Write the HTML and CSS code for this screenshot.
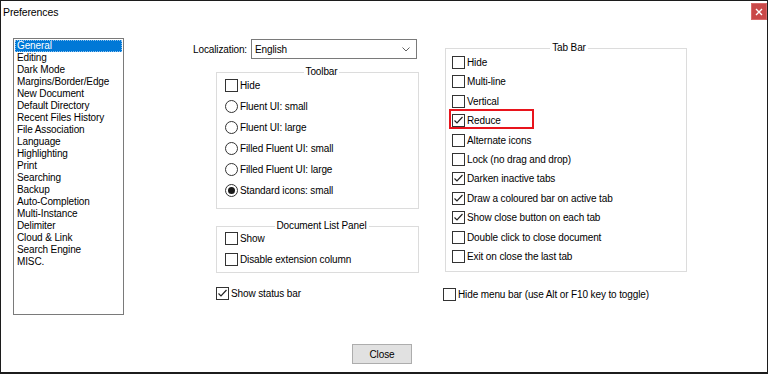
FILE: index.html
```html
<!DOCTYPE html>
<html>
<head>
   <title>Preferences</title>
   <link rel="stylesheet" href="styles.css">
</head>
<body>

<div class="window">
   <div class="titlebar">
      <span class="title">Preferences</span>
      <span class="xbtn"><svg width="8" height="8" viewBox="0 0 8 8"><path d="M1 1l6 6M7 1l-6 6" stroke="#fff" stroke-width="1.4"/></svg></span>
   </div>

   <div class="main">
      <!-- liste des pages -->
      <ul class="listbox">
         <li class="sel">General</li>
         <li>Editing</li>
         <li>Dark Mode</li>
         <li>Margins/Border/Edge</li>
         <li>New Document</li>
         <li>Default Directory</li>
         <li>Recent Files History</li>
         <li>File Association</li>
         <li>Language</li>
         <li>Highlighting</li>
         <li>Print</li>
         <li>Searching</li>
         <li>Backup</li>
         <li>Auto-Completion</li>
         <li>Multi-Instance</li>
         <li>Delimiter</li>
         <li>Cloud &amp; Link</li>
         <li>Search Engine</li>
         <li>MISC.</li>
      </ul>

      <div class="col-mid">
         <div class="loc">
            <span class="loc-label">Localization:</span>
            <div class="combo">
               <span>English</span>
               <svg width="8" height="5" viewBox="0 0 8 5"><path d="M0.5 0.5l3.5 3.5 3.5-3.5" fill="none" stroke="#606060"/></svg>
            </div>
         </div>

         <fieldset class="grp grp-toolbar">
            <legend>Toolbar</legend>
            <div class="opt"><span class="cb"></span>Hide</div>
            <div class="opt"><span class="rb"></span>Fluent UI: small</div>
            <div class="opt"><span class="rb"></span>Fluent UI: large</div>
            <div class="opt"><span class="rb"></span>Filled Fluent UI: small</div>
            <div class="opt"><span class="rb"></span>Filled Fluent UI: large</div>
            <div class="opt"><span class="rb on"></span>Standard icons: small</div>
         </fieldset>

         <fieldset class="grp grp-doclist">
            <legend>Document List Panel</legend>
            <div class="opt"><span class="cb"></span>Show</div>
            <div class="opt"><span class="cb"></span>Disable extension column</div>
         </fieldset>

         <div class="opt status"><span class="cb"><svg viewBox="0 0 11 11"><path d="M1.5 5.5l2.5 2.5 5.5-6"/></svg></span>Show status bar</div>
      </div>

      <div class="col-right">
         <fieldset class="grp grp-tabbar">
            <legend>Tab Bar</legend>
            <div class="opt"><span class="cb"></span>Hide</div>
            <div class="opt"><span class="cb"></span>Multi-line</div>
            <div class="opt"><span class="cb"></span>Vertical</div>
            <div class="opt hl"><span class="cb"><svg viewBox="0 0 11 11"><path d="M1.5 5.5l2.5 2.5 5.5-6"/></svg></span>Reduce</div>
            <div class="opt"><span class="cb"></span>Alternate icons</div>
            <div class="opt"><span class="cb"></span>Lock (no drag and drop)</div>
            <div class="opt"><span class="cb"><svg viewBox="0 0 11 11"><path d="M1.5 5.5l2.5 2.5 5.5-6"/></svg></span>Darken inactive tabs</div>
            <div class="opt"><span class="cb"><svg viewBox="0 0 11 11"><path d="M1.5 5.5l2.5 2.5 5.5-6"/></svg></span>Draw a coloured bar on active tab</div>
            <div class="opt"><span class="cb"><svg viewBox="0 0 11 11"><path d="M1.5 5.5l2.5 2.5 5.5-6"/></svg></span>Show close button on each tab</div>
            <div class="opt"><span class="cb"></span>Double click to close document</div>
            <div class="opt"><span class="cb"></span>Exit on close the last tab</div>
         </fieldset>

         <div class="opt menubar"><span class="cb"></span>Hide menu bar (use Alt or F10 key to toggle)</div>
      </div>
   </div>

   <div class="footer">
      <button class="btn">Close</button>
   </div>
</div>

</body>
</html>
```

FILE: styles.css
```css
/* Boite de dialogue "Preferences" */

body {
   margin: 0;
   font-family: "Liberation Sans", Arial, sans-serif;
   font-size: 10px;
   letter-spacing: -0.12px;
   color: #000;
   background: #fff;
}

.window {
   width: 768px;
   height: 374px;
   box-sizing: border-box;
   border: 1px solid #1c1c1c;
   border-bottom-width: 2px;
   background: #fff;
}

.titlebar {
   display: flex;
   justify-content: space-between;
   height: 22px;
}

.title {
   padding: 5px 0 0 2px;
   font-size: 10.5px;
}

.xbtn {
   display: flex;
   align-items: center;
   justify-content: center;
   width: 16px;
   height: 17px;
   margin-top: 2px;
   background: #c94848;
   box-sizing: border-box;
   border: 1px solid #d86a6a;
}

.main {
   display: flex;
   align-items: flex-start;
   padding-left: 12px;
   margin-top: 15px;
}

/* liste */
.listbox {
   list-style: none;
   margin: 0;
   padding: 1px;
   width: 111px;
   height: 277px;
   box-sizing: border-box;
   border: 1px solid #7a7a7a;
}

.listbox li {
   height: 12px;
   line-height: 12px;
   padding-left: 2px;
   white-space: nowrap;
}

.listbox li.sel {
   background: #0078d7;
   color: #fff;
   outline: 1px dotted #8fc3ee;
   outline-offset: -1px;
}

/* colonne du milieu */
.col-mid {
   display: flex;
   flex-direction: column;
   align-items: flex-start;
   margin-left: 69px;
   width: 226px;
}

.loc {
   display: flex;
   align-items: center;
   margin-top: 1px;
}

.loc-label {
   width: 58px;
}

.combo {
   display: flex;
   align-items: center;
   justify-content: space-between;
   width: 166px;
   height: 20px;
   box-sizing: border-box;
   border: 1px solid #7a7a7a;
   padding: 0 6px 0 3px;
}

/* groupes */
.grp {
   margin: 0;
   border: 1px solid #dcdcdc;
   display: flex;
   flex-direction: column;
   min-width: 0;
   box-sizing: border-box;
}

.grp legend {
   margin: 0 auto;
   padding: 0 2px;
   line-height: 12px;
}

.grp-toolbar {
   margin: 7px 0 0 23px;
   width: 203px;
   padding: 1px 0 11px 8px;
   gap: 8px;
}

.grp-doclist {
   margin: 11px 0 0 23px;
   width: 203px;
   padding: 0 0 6px 8px;
   gap: 8px;
}

.grp-tabbar {
   margin: 4px 0 0 2px;
   width: 242px;
   padding: 2px 0 8px 6px;
   gap: 6.4px;
}

.opt {
   display: flex;
   align-items: center;
   height: 13px;
   white-space: nowrap;
}

.status {
   margin: 14px 0 0 23px;
}

.menubar {
   margin-top: 16px;
}

.cb, .rb {
   width: 13px;
   height: 13px;
   box-sizing: border-box;
   border: 1px solid #333;
   background: #fff;
   margin-right: 2px;
   flex: none;
   display: flex;
   align-items: center;
   justify-content: center;
}

.cb svg {
   width: 11px;
   height: 11px;
   fill: none;
   stroke: #222;
   stroke-width: 1.2;
}

.rb {
   border-radius: 50%;
}

.rb.on::after {
   content: "";
   width: 7px;
   height: 7px;
   border-radius: 50%;
   background: #1a1a1a;
}

.hl {
   align-self: flex-start;
   width: 85px;
   height: auto;
   box-sizing: border-box;
   border: 2px solid #e8141c;
   padding: 3px 0 0 1px;
   margin: -5px 0 -2px -3px;
}

/* colonne de droite */
.col-right {
   display: flex;
   flex-direction: column;
   align-items: flex-start;
   margin-left: 24px;
}

/* bouton */
.footer {
   display: flex;
   justify-content: center;
   padding-right: 4px;
   margin-top: 29px;
}

.btn {
   width: 60px;
   height: 20px;
   padding: 0;
   font-family: "Liberation Sans", Arial, sans-serif;
   font-size: 10px;
   letter-spacing: -0.12px;
   background: #e1e1e1;
   border: 1px solid #adadad;
   color: #000;
}
```
